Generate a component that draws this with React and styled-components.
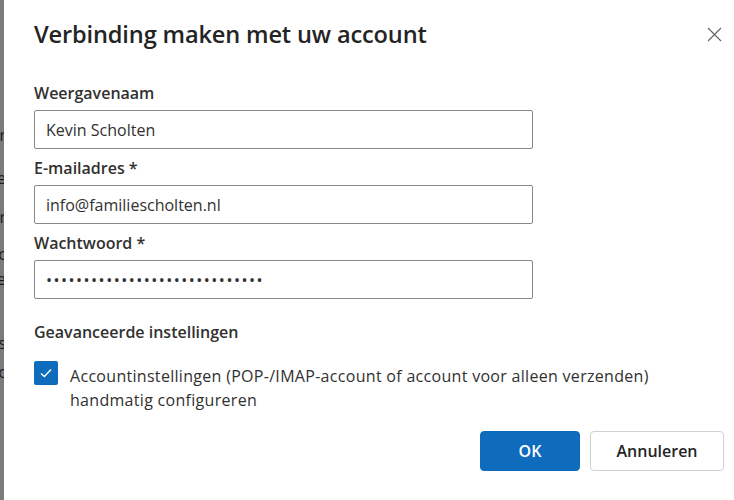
import styled, { createGlobalStyle } from "styled-components";

const GlobalStyle = createGlobalStyle`
  html, body {
    margin: 0;
    padding: 0;
    background: #ffffff;
  }
  * {
    box-sizing: border-box;
  }
`;

const Screen = styled.div`
  display: flex;
  width: 734px;
  height: 500px;
  overflow: hidden;
  font-family: "Open Sans", "Noto Sans", sans-serif;
  color: #323130;
`;

// dimmed page behind the dialog, only a sliver of it is visible
const Backdrop = styled.div`
  flex: 0 0 4px;
  background: #7b7b7b;
  overflow: hidden;
  display: flex;
  flex-direction: column;
  align-items: flex-end;
  padding-top: 123px;
  font-size: 16px;
  line-height: 24px;
  color: #1b1b1b;
`;

const Peek = styled.span`
  display: block;
  flex: 0 0 ${(p) => p.$h}px;
  white-space: nowrap;
  margin-right: -2px;
`;

const Dialog = styled.div`
  flex: 1;
  background: #ffffff;
  padding: 18px 10px 0 30px;
  display: flex;
  flex-direction: column;
`;

const Header = styled.div`
  display: flex;
  align-items: center;
  justify-content: space-between;
  height: 32px;
  margin-bottom: 32px;
`;

const Title = styled.h1`
  margin: 0;
  font-size: 23.6px;
  font-weight: 600;
  letter-spacing: -0.15px;
  color: #242424;
`;

const CloseButton = styled.button`
  border: none;
  background: none;
  padding: 0;
  width: 20px;
  height: 20px;
  display: flex;
  align-items: center;
  justify-content: center;
  color: #616161;
  cursor: pointer;
`;

const Field = styled.div`
  display: flex;
  flex-direction: column;
  width: 499px;
`;

const Label = styled.label`
  font-size: 16px;
  font-weight: 600;
  line-height: 22px;
  color: #323130;
  margin-bottom: 6px;
`;

const Input = styled.input`
  height: 39px;
  border: 1px solid #8a8886;
  border-radius: 2px;
  padding: 0 11px;
  font-family: inherit;
  font-size: 16px;
  color: #323130;
  outline: none;
  margin-bottom: ${(p) => p.$gap ?? 8}px;
  ${(p) =>
    p.type === "password" &&
    `
    letter-spacing: 1.5px;
  `}
`;

const Section = styled.div`
  font-size: 16px;
  font-weight: 600;
  color: #323130;
  line-height: 22px;
  margin-top: 22px;
  margin-bottom: 18px;
`;

const CheckRow = styled.label`
  display: flex;
  align-items: flex-start;
  gap: 12px;
  font-size: 16px;
  line-height: 24px;
  color: #323130;
`;

const Box = styled.span`
  flex: 0 0 24px;
  height: 24px;
  border-radius: 2px;
  background: #0f6cbd;
  display: flex;
  align-items: center;
  justify-content: center;
`;

const CheckText = styled.span`
  padding-top: 3px;
  letter-spacing: 0.3px;
`;

const Footer = styled.div`
  display: flex;
  justify-content: flex-end;
  gap: 10px;
  margin-top: 19px;
`;

const Button = styled.button`
  height: 40px;
  min-width: ${(p) => (p.$primary ? 100 : 134)}px;
  border-radius: 4px;
  font-family: inherit;
  font-size: 16px;
  font-weight: 600;
  border: 1px solid ${(p) => (p.$primary ? "#0f6cbd" : "#d1d1d1")};
  background: ${(p) => (p.$primary ? "#0f6cbd" : "#ffffff")};
  color: ${(p) => (p.$primary ? "#ffffff" : "#242424")};
  cursor: pointer;
`;

export default function App() {
  return (
    <>
      <GlobalStyle />
      <Screen>
        <Backdrop>
          <Peek $h={43}>r</Peek>
          <Peek $h={39}>e</Peek>
          <Peek $h={37}>r</Peek>
          <Peek $h={25}>c</Peek>
          <Peek $h={64}>e</Peek>
          <Peek $h={29}>s</Peek>
          <Peek $h={24}>c</Peek>
        </Backdrop>
        <Dialog>
          <Header>
            <Title>Verbinding maken met uw account</Title>
            <CloseButton aria-label="Sluiten">
              <svg width="15" height="15" viewBox="0 0 15 15">
                <path d="M1 1L14 14M14 1L1 14" stroke="currentColor" strokeWidth="1.1" />
              </svg>
            </CloseButton>
          </Header>
          <Field>
            <Label>Weergavenaam</Label>
            <Input defaultValue="Kevin Scholten" />
            <Label>E-mailadres *</Label>
            <Input defaultValue="info@familiescholten.nl" />
            <Label>Wachtwoord *</Label>
            <Input type="password" defaultValue="abcdefghijklmnopqrstuvwxyzabc" $gap={0} />
          </Field>
          <Section>Geavanceerde instellingen</Section>
          <CheckRow>
            <Box>
              <svg width="14" height="14" viewBox="0 0 14 14">
                <path d="M2 7.4L5.4 10.6L12 3.6" fill="none" stroke="#fff" strokeWidth="1.4" />
              </svg>
            </Box>
            <CheckText>
              Accountinstellingen (POP-/IMAP-account of account voor alleen verzenden)
              <br />
              handmatig configureren
            </CheckText>
          </CheckRow>
          <Footer>
            <Button $primary>OK</Button>
            <Button>Annuleren</Button>
          </Footer>
        </Dialog>
      </Screen>
    </>
  );
}
